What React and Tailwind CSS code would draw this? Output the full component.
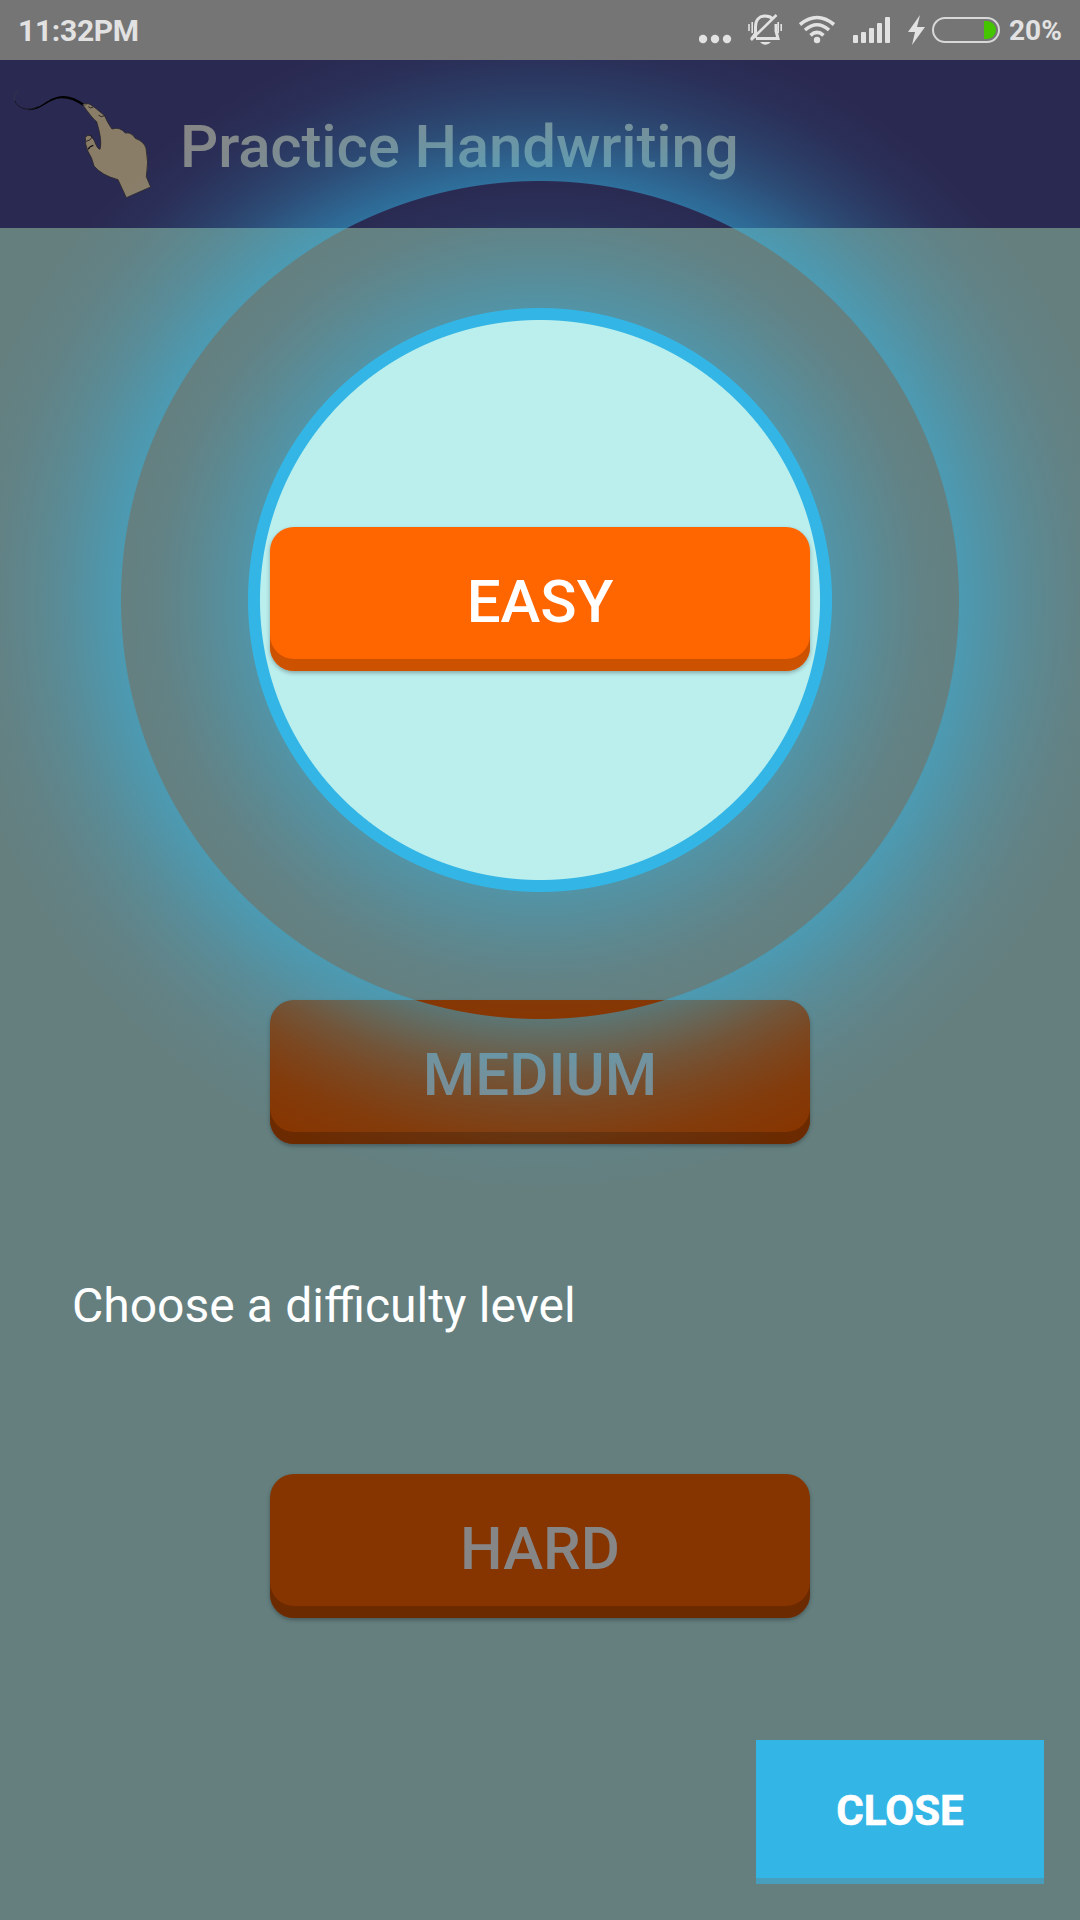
import React from "react";

function HandLogo() {
  return (
    <svg className="h-[168px] w-[183px] shrink-0" viewBox="-1 -2 549 504" fill="none">
      <path d="M53 90Q38 100 43 120" stroke="#3d3d4c" strokeWidth="1.8" />
      <path d="M43 120C52 143 80 154 112 138" stroke="#17171f" strokeWidth="2.8" />
      <path
        d="M84 147C125 145 142 108 188 106C215 107 230 116 252 130L248 136C228 122 208 113 184 113C148 112 125 149 84 149Z"
        fill="#000"
      />
      <path
        d="M247 132Q252 127 261 129Q267 128 285 142L313 165Q318 180 335 205Q358 197 375 217Q393 214 405 233Q431 243 437 262Q446 305 438 348L451 379L378 411L353 357Q304 344 281 316Q276 292 263 272Q253 250 255 230Q261 221 272 225Q278 235 282 240Q290 264 299 266C306 240 295 205 289 183Q277 175 247 132Z"
        fill="#8a7d67"
        stroke="#28252c"
        strokeWidth="2.5"
        strokeLinejoin="round"
      />
      <path d="M264 138Q270 145 279 139M295 164Q302 171 313 165M257 242Q270 240 274 231Q273 225 270 223" stroke="#17151a" strokeWidth="2.5" />
      <path d="M264 266Q267 257 279 254" stroke="#100e12" strokeWidth="3.5" />
      <path d="M250 133Q256 136 259 130" stroke="#222" strokeWidth="1.5" />
    </svg>
  );
}

function StatusBar() {
  return (
    <div className="flex h-[60px] items-center bg-[#757575] pl-[18px] text-[#e2e2e2]">
      <span className="w-[681px] pt-[2px] text-[30px] leading-[60px] font-bold tracking-[-0.3px]">11:32PM</span>
      <svg className="h-[60px] w-[49px] shrink-0" viewBox="699 0 49 60" fill="currentColor">
        <circle cx="703" cy="39" r="4.2" />
        <circle cx="715" cy="39" r="4.2" />
        <circle cx="727" cy="39" r="4.2" />
      </svg>
      <svg className="h-[60px] w-[51px] shrink-0" viewBox="748 0 51 60" fill="none" stroke="currentColor">
        <path d="M755.5 35V27C755.5 20 759 16 765 16Q770 16 773 19M776 24V31L778 38.5H758" strokeWidth="3" />
        <path d="M751 40L776.5 15" strokeWidth="2.6" />
        <path d="M749 24V31M752.2 22V33M778.2 22V33M781.2 24V31" strokeWidth="1.6" />
        <path d="M750 38.5L754 33L757 31V38Z" fill="currentColor" stroke="none" />
        <path d="M756 38.5H779" strokeWidth="3" />
        <path d="M760 42H771Q765.500 47.500 760 42Z" fill="currentColor" stroke="none" />
      </svg>
      <svg className="h-[60px] w-[54px] shrink-0" viewBox="799 0 54 60" fill="none" stroke="currentColor">
        <path d="M800 24.500Q817 10.500 834 24.500" strokeWidth="3.6" />
        <path d="M805 30Q817 19.500 829 30" strokeWidth="3.6" />
        <path d="M810.500 35.300Q817 29.500 823.500 35.300" strokeWidth="3.6" />
        <circle cx="817" cy="40" r="3.2" fill="currentColor" stroke="none" />
      </svg>
      <svg className="h-[60px] w-[54px] shrink-0" viewBox="853 0 54 60" fill="currentColor">
        <rect x="853" y="35" width="5" height="8" rx="1" />
        <rect x="861" y="32" width="5" height="11" rx="1" />
        <rect x="869" y="28" width="5" height="15" rx="1" />
        <rect x="877" y="23" width="5" height="20" rx="1" />
        <rect x="885" y="17" width="5" height="26" rx="1" />
      </svg>
      <svg className="h-[60px] w-[25px] shrink-0" viewBox="907 0 25 60" fill="currentColor">
        <path d="M920 15L908 32H915L912 45L925 27H917Z" />
      </svg>
      <svg className="h-[60px] w-[77px] shrink-0" viewBox="932 0 77 60">
        <rect x="933" y="18" width="66" height="24" rx="12" fill="none" stroke="#d8d8d8" strokeWidth="2" />
        <path d="M984 21H987A9 9 0 0 1 987 39H984Z" fill="#45c400" />
      </svg>
      <span className="pt-[2px] text-[28px] leading-[60px] font-bold">20%</span>
    </div>
  );
}

function DimmedButton({ children }) {
  return (
    <button className="flex h-[144px] w-[540px] items-center justify-center rounded-[24px] bg-[#873500] pt-[6px] text-[60px] leading-none font-medium text-[#868686] shadow-[inset_0_-12px_0_#6b2a00,0_2px_4px_rgba(0,0,0,0.3)]">
      {children}
    </button>
  );
}

function SpotlightGlow() {
  return (
    <div className="pointer-events-none absolute inset-x-0 top-[60px] h-[1860px] bg-[radial-gradient(circle_at_540px_540px,#bbefee_279.500px,#33b5e5_280.500px,#33b5e5_291.500px,rgba(51,181,229,0.38)_292.500px,rgba(51,181,229,0.27)_320px,rgba(51,181,229,0.15)_352px,rgba(51,181,229,0.05)_385px,rgba(51,181,229,0.01)_418.500px,rgba(51,181,229,0.5)_419.500px,rgba(51,181,229,0.39)_445px,rgba(51,181,229,0.25)_475px,rgba(51,181,229,0.14)_508px,rgba(51,181,229,0.05)_545px,rgba(51,181,229,0)_590px)]" />
  );
}

export default function App() {
  return (
    <div className="relative flex h-[1920px] w-[1080px] flex-col overflow-hidden bg-[#657f7f] font-['Roboto',sans-serif]">
      <StatusBar />
      <header className="flex h-[168px] shrink-0 items-center bg-[#2a2951]">
        <HandLogo />
        <h1 className="-ml-[3px] pt-[6px] text-[60px] leading-none font-medium tracking-[-0.15px] text-[#868686]">Practice Handwriting</h1>
      </header>
      <main className="flex flex-col items-center gap-[330px] pt-[772px]">
        <DimmedButton>MEDIUM</DimmedButton>
        <DimmedButton>HARD</DimmedButton>
      </main>
      <SpotlightGlow />
      <div className="absolute inset-x-0 top-[527px] flex justify-center">
        <button className="flex h-[144px] w-[540px] items-center justify-center rounded-[24px] bg-[#ff6600] pt-[6px] text-[60px] leading-none font-medium text-white shadow-[inset_0_-12px_0_#cc5200,0_2px_4px_rgba(0,0,0,0.3)]">
          EASY
        </button>
      </div>
      <p className="absolute top-[1278px] left-[72px] text-[48px] leading-[56px] text-white [word-spacing:0.3px]">Choose a difficulty level</p>
      <button className="absolute right-[36px] bottom-[36px] flex h-[144px] w-[288px] items-center justify-center border-b-[6px] border-[#489ebd] bg-[#33b5e5] pt-[3px] text-[42px] leading-none font-bold text-white [-webkit-text-stroke:0.6px_white]">
        CLOSE
      </button>
    </div>
  );
}
